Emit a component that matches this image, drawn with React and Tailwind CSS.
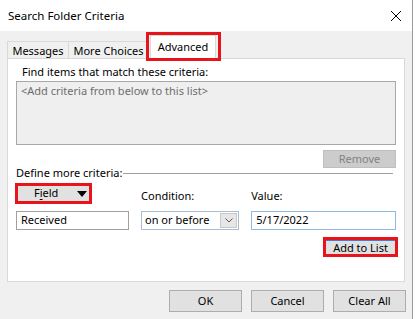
import { useState } from 'react';

function CloseIcon() {
  return (
    <svg width="12" height="12" viewBox="0 0 12 12" className="text-black">
      <path d="M1 1 L11 11 M11 1 L1 11" stroke="currentColor" strokeWidth="1" fill="none" />
    </svg>
  );
}

function Button({ children, className = '' }) {
  return (
    <div
      className={`flex items-center justify-center border border-[#adadad] bg-[#e1e1e1] text-black ${className}`}
    >
      {children}
    </div>
  );
}

export default function App() {
  const [value] = useState('5/17/2022');

  return (
    <div className="w-[415px] h-[319px] bg-white overflow-hidden font-['Noto_Sans',sans-serif] text-[11px] text-black">
      <div className="w-[413px] h-[319px] flex flex-col border-r border-[#9a9a9a]">
        {/* title bar */}
        <div className="h-[31px] bg-white flex items-center justify-between pl-[8px] pr-[10px] shrink-0">
          <span className="text-[11.5px] leading-none">Search Folder Criteria</span>
          <CloseIcon />
        </div>

        {/* body */}
        <div className="flex-1 bg-[#f0f0f0] px-[7px] flex flex-col">
          {/* tabs */}
          <div className="flex items-end h-[27px]">
            <div className="h-[17px] w-[62px] border border-b-0 border-[#d9d9d9] flex items-center justify-center leading-none">
              Messages
            </div>
            <div className="h-[17px] w-[80px] border border-l-0 border-b-0 border-[#d9d9d9] flex items-center justify-center leading-none">
              More Choices
            </div>
            <div className="relative ml-[1px]">
              <div className="h-[24px] w-[66px] bg-white border border-b-0 border-[#d9d9d9] flex items-center justify-center leading-none relative top-[1px] pb-[2px]">
                Advanced
              </div>
              <div className="absolute left-[-4px] top-[-2px] w-[75px] h-[29px] border-[3px] border-[#e8141c] pointer-events-none" />
            </div>
          </div>

          {/* panel */}
          <div className="h-[224px] bg-white border border-[#d9d9d9] flex flex-col px-[8px]">
            <div className="pl-[6px] pt-[4px] leading-[17px]">Find items that match these criteria:</div>
            <div className="mt-[1px] h-[64px] border border-[#a8a8a8] bg-[#efefef] px-[4px] pt-[1px]">
              <span className="text-[#6d6d6d] leading-[16px]">&lt;Add criteria from below to this list&gt;</span>
            </div>
            <div className="flex justify-end mt-[5px]">
              <div className="w-[73px] h-[18px] bg-[#cccccc] border border-[#bfbfbf] text-[#838383] flex items-center justify-center">
                Remove
              </div>
            </div>

            <div className="flex items-center mt-[-2px] pr-[3px]">
              <span className="leading-[14px]">Define more criteria:</span>
              <div className="flex-1 h-px bg-[#a0a0a0] ml-[1px]" />
            </div>

            <div className="flex mt-[3px]">
              <div className="w-[114px] flex flex-col">
                <div className="w-[77px] h-[21px] border-[3px] border-[#e8141c] ml-[-1px]">
                  <div className="h-full bg-[#e1e1e1] flex items-center pl-[16px]">
                    <span>F<span className="underline underline-offset-2">i</span>eld</span>
                    <svg width="10" height="6" viewBox="0 0 10 6" className="ml-[19px]">
                      <path d="M0 0 L10 0 L5 6 Z" fill="#000" />
                    </svg>
                  </div>
                </div>
                <div className="mt-[7px] h-[19px] border border-[#a0a0a0] bg-white flex items-center pl-[4px]">
                  Received
                </div>
              </div>

              <div className="w-[99px] ml-[12px] flex flex-col">
                <div className="h-[21px] flex items-end leading-[16px]">Condition:</div>
                <div className="mt-[7px] h-[19px] border border-[#a9bcd6] bg-white flex">
                  <div className="flex-1 flex items-center pl-[3px]">on or before</div>
                  <div className="w-[17px] h-[15px] mt-[1px] mr-[1px] bg-[#e6e6e6] border border-[#c9c9c9] flex items-center justify-center">
                    <svg width="8" height="5" viewBox="0 0 8 5">
                      <path d="M0.5 0.5 L4 4 L7.5 0.5" stroke="#555" strokeWidth="1" fill="none" />
                    </svg>
                  </div>
                </div>
              </div>

              <div className="w-[146px] ml-[12px] flex flex-col">
                <div className="h-[21px] flex items-end leading-[16px]">Value:</div>
                <div className="mt-[7px] h-[19px] border border-[#8fbbe6] bg-white flex items-center pl-[4px]">
                  {value}
                </div>
              </div>
            </div>

            <div className="flex justify-end mt-[7px] mr-[-2px]">
              <div className="w-[75px] h-[20px] border-[3px] border-[#e8141c]">
                <div className="h-full bg-[#e1e1e1] border-t border-[#3c7fd6] flex items-center justify-center leading-none">
                  Add to List
                </div>
              </div>
            </div>
          </div>

          {/* footer buttons */}
          <div className="flex justify-end gap-[9px] mt-[8px] mr-[-1px]">
            <Button className="w-[73px] h-[22px]">OK</Button>
            <Button className="w-[73px] h-[22px]">Cancel</Button>
            <Button className="w-[73px] h-[22px]">Clear All</Button>
          </div>
        </div>
      </div>
    </div>
  );
}
